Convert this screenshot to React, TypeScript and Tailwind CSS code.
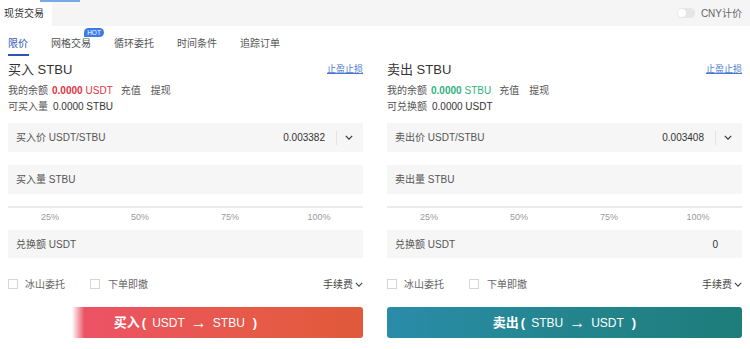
import React from "react";

const font = "font-['Liberation_Sans','Noto_Sans_CJK_SC',sans-serif]";

function Chevron({ className = "" }: { className?: string }) {
  return (
    <svg viewBox="0 0 10 6" className={className} fill="none" stroke="currentColor" strokeWidth={1.4}>
      <path d="M1 1l4 4 4-4" />
    </svg>
  );
}

interface PanelProps {
  side: "buy" | "sell";
}

function TradePanel({ side }: PanelProps) {
  const buy = side === "buy";
  return (
    <div className="flex flex-col w-[355px]">
      <div className="flex items-center justify-between h-[20px] mt-[60px]">
        <span className="text-[13px] text-[#333]">{buy ? "买入 STBU" : "卖出 STBU"}</span>
        <span className="text-[9px] text-[#4a78cf] underline">止盈止损</span>
      </div>
      <div className="flex items-center h-[16px] mt-[2px] text-[10px] text-[#555]">
        <span>我的余额</span>
        <span className={`ml-[4px] font-bold ${buy ? "text-[#e2333f]" : "text-[#2fb37c]"}`}>0.0000</span>
        <span className={`ml-[3px] ${buy ? "text-[#e2333f]" : "text-[#2fb37c]"}`}>{buy ? "USDT" : "STBU"}</span>
        <span className="ml-[8px]">充值</span>
        <span className="ml-[10px]">提现</span>
      </div>
      <div className="flex items-center h-[16px] text-[10px] text-[#555]">
        <span>{buy ? "可买入量" : "可兑换额"}</span>
        <span className="ml-[5px] text-[#333]">{buy ? "0.0000 STBU" : "0.0000 USDT"}</span>
      </div>
      <div className="mt-[9px] h-[29px] bg-[#f6f6f6] flex items-center pl-[8px] pr-[10px] text-[10px] text-[#555]">
        <span className="flex-1">{buy ? "买入价 USDT/STBU" : "卖出价 USDT/STBU"}</span>
        <span className="text-[#333]">{buy ? "0.003382" : "0.003408"}</span>
        <span className="ml-[11px] w-px h-[14px] bg-[#e3e3e3]" />
        <Chevron className="ml-[8px] w-[8px] h-[5px] text-[#333]" />
      </div>
      <div className="mt-[13px] h-[29px] bg-[#f6f6f6] flex items-center pl-[8px] text-[10px] text-[#555]">
        {buy ? "买入量 STBU" : "卖出量 STBU"}
      </div>
      <div className="mt-[12px] h-[2px] bg-[#ebebeb]" />
      <div className="flex mt-[3px] h-[14px] text-[9px] text-[#9a9a9a]">
        <span className="ml-[26px] w-[32px] text-center">25%</span>
        <span className="ml-[58px] w-[32px] text-center">50%</span>
        <span className="ml-[58px] w-[32px] text-center">75%</span>
        <span className="ml-[57px] w-[32px] text-center">100%</span>
      </div>
      <div className="mt-[5px] h-[28px] bg-[#f6f6f6] flex items-center pl-[8px] pr-[24px] text-[10px] text-[#555]">
        <span className="flex-1">兑换额 USDT</span>
        {!buy && <span className="text-[#333]">0</span>}
      </div>
      <div className="mt-[13px] h-[26px] flex items-center text-[10px] text-[#666]">
        <span className="w-[10px] h-[10px] border border-[#d6d6d6] bg-white" />
        <span className="ml-[7px]">冰山委托</span>
        <span className="ml-[25px] w-[10px] h-[10px] border border-[#d6d6d6] bg-white" />
        <span className="ml-[8px]">下单即撤</span>
        <span className="ml-auto text-[#444]">手续费</span>
        <Chevron className="ml-[2px] w-[8px] h-[5px] text-[#444]" />
      </div>
      <div
        className={`mt-[10px] h-[31px] rounded-[3px] flex items-center justify-center text-white text-[12px] ${
          buy
            ? "bg-[linear-gradient(90deg,#ffffff_0%,#ffffff_18%,#ec5265_21.5%,#e65a47_70%,#e0593a_100%)]"
            : "bg-[linear-gradient(90deg,#2a8ca9_0%,#24858f_50%,#1d7d7a_100%)]"
        }`}
      >
        <span className="font-bold text-[13px]">{buy ? "买入" : "卖出"}</span>
        <span className="font-bold text-[13px] ml-[2px]">(</span>
        <span className="ml-[6px]">{buy ? "USDT" : "STBU"}</span>
        <span className="mx-[6px] text-[16px] leading-none font-bold">→</span>
        <span>{buy ? "STBU" : "USDT"}</span>
        <span className="font-bold text-[13px] ml-[8px]">)</span>
      </div>
    </div>
  );
}

export default function App() {
  return (
    <div className={`relative w-[750px] h-[349px] bg-white overflow-hidden ${font}`}>
      <div className="flex items-center h-[26px] bg-[#f5f5f5]">
        <div className="relative h-full w-[52px] bg-white flex items-center pl-[4px] text-[10px] text-[#333]">
          现货交易
          <span className="absolute top-0 left-[40px] w-[40px] h-[2px] bg-[#7aa8e6]" />
        </div>
        <div className="ml-auto mr-[8px] flex items-center">
          <span className="w-[18px] h-[10px] rounded-full bg-[#e6e6e6] flex items-center pl-[1px]">
            <span className="w-[8px] h-[8px] rounded-full bg-white" />
          </span>
          <span className="ml-[6px] text-[10px] text-[#666]">CNY计价</span>
        </div>
      </div>
      <div className="flex items-end h-[28px] mt-[2px] pl-[8px] text-[10px] text-[#555]">
        <div className="flex flex-col">
          <span className="text-[#2b56b8]">限价</span>
          <span className="mt-[3px] w-[21px] h-[2px] bg-[#2b56b8]" />
        </div>
        <div className="relative ml-[22px] mb-[5px]">
          网格交易
          <span className="absolute -top-[8px] left-[33px] w-[20px] text-center h-[9px] rounded-[5px_5px_5px_0] bg-[#3c7be6] text-white text-[6.5px] leading-[9px]">
            HOT
          </span>
        </div>
        <span className="ml-[23px] mb-[5px]">循环委托</span>
        <span className="ml-[23px] mb-[5px]">时间条件</span>
        <span className="ml-[23px] mb-[5px]">追踪订单</span>
      </div>
      <div className="absolute top-0 left-[8px] right-[8px] flex justify-between">
        <TradePanel side="buy" />
        <TradePanel side="sell" />
      </div>
    </div>
  );
}
